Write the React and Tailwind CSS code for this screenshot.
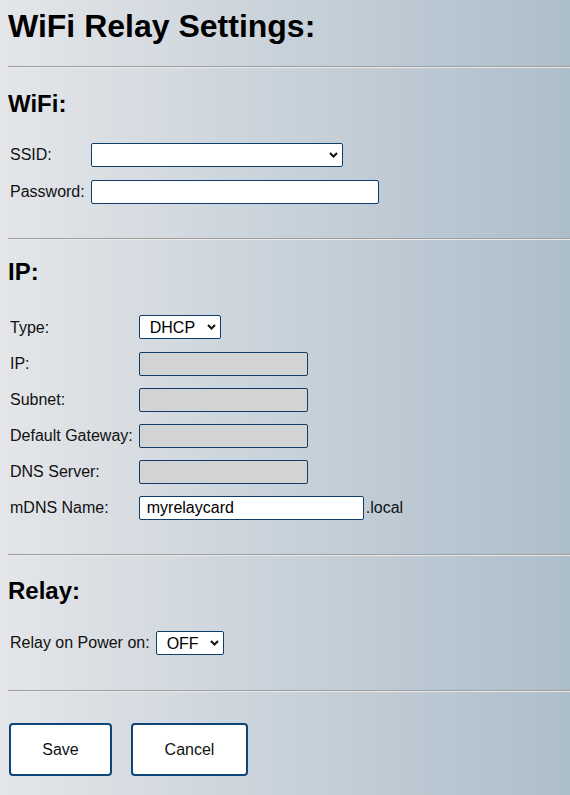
const Chevron = () => (
  <svg className="pointer-events-none absolute right-[5px] top-1/2 -translate-y-1/2" width="9" height="6" viewBox="0 0 9 6" fill="none">
    <path d="M1 1l3.5 3.5L8 1" stroke="#111" strokeWidth="2" />
  </svg>
);

const Select = ({ w, value, pl = 'pl-[10px]' }) => (
  <div className={`relative h-[24px] ${w}`}>
    <select
      defaultValue={value}
      className={`h-full w-full appearance-none rounded-[2px] border border-[#0f3e69] bg-white ${pl} pr-5 text-[16px] text-black outline-none`}
    >
      <option value={value}>{value}</option>
    </select>
    <Chevron />
  </div>
);

const Input = ({ w, value = '', disabled }) => (
  <input
    type="text"
    defaultValue={value}
    disabled={disabled}
    className={`h-[24px] ${w} rounded-[2px] border border-[#0f3e69] px-[7px] text-[16px] text-black outline-none ${
      disabled ? 'bg-[#d3d3d3]' : 'bg-white'
    }`}
  />
);

const Hr = ({ className }) => (
  <div className={`ml-2 h-[2px] border-t border-t-[#9c9c9c] border-b border-b-[#ececec] ${className}`} />
);

const Label = ({ children }) => <span className="pl-[2px] text-[16px] leading-[24px] text-[#111]">{children}</span>;

export default function App() {
  return (
    <div
      className="min-h-[795px] w-full bg-linear-to-r from-[#e4e6e9] to-[#adbecb] pb-4 text-black"
      style={{ fontFamily: '"Liberation Sans", Arial, sans-serif' }}
    >
      <h1 className="ml-2 pt-[8px] text-[32px] font-bold leading-[37px]">WiFi Relay Settings:</h1>
      <Hr className="mt-[21px]" />

      <h2 className="ml-2 mt-[22px] text-[24px] font-bold leading-[28px]">WiFi:</h2>
      <div className="ml-2 mt-[25px] grid grid-cols-[auto_auto] justify-start items-center gap-x-[6px] gap-y-[13px]">
        <Label>SSID:</Label>
        <Select w="w-[252px]" value="" />
        <Label>Password:</Label>
        <Input w="w-[288px]" />
      </div>
      <Hr className="mt-[34px]" />

      <h2 className="ml-2 mt-[18px] text-[24px] font-bold leading-[28px]">IP:</h2>
      <div className="ml-2 mt-[29px] grid grid-cols-[auto_auto] justify-start items-center gap-x-[6px] gap-y-[12px]">
        <Label>Type:</Label>
        <div className="pb-[1px]">
          <Select w="w-[82px]" value="DHCP" />
        </div>
        <Label>IP:</Label>
        <Input w="w-[169px]" disabled />
        <Label>Subnet:</Label>
        <Input w="w-[169px]" disabled />
        <Label>Default Gateway:</Label>
        <Input w="w-[169px]" disabled />
        <Label>DNS Server:</Label>
        <Input w="w-[169px]" disabled />
        <Label>mDNS Name:</Label>
        <div className="flex items-center gap-[2px]">
          <Input w="w-[225px]" value="myrelaycard" />
          <span className="text-[16px] text-[#111]">.local</span>
        </div>
      </div>
      <Hr className="mt-[34px]" />

      <h2 className="ml-2 mt-[21px] text-[24px] font-bold leading-[28px]">Relay:</h2>
      <div className="ml-2 mt-[26px] flex items-center gap-x-[6px]">
        <Label>Relay on Power on:</Label>
        <Select w="w-[68px]" value="OFF" />
      </div>
      <Hr className="mt-[35px]" />

      <div className="ml-[9px] mt-[31px] flex gap-[19px]">
        <button className="h-[53px] w-[103px] rounded-[4px] border-2 border-[#0e4677] bg-white text-[16px] text-[#111]">
          Save
        </button>
        <button className="h-[53px] w-[117px] rounded-[4px] border-2 border-[#0e4677] bg-white text-[16px] text-[#111]">
          Cancel
        </button>
      </div>
    </div>
  );
}
